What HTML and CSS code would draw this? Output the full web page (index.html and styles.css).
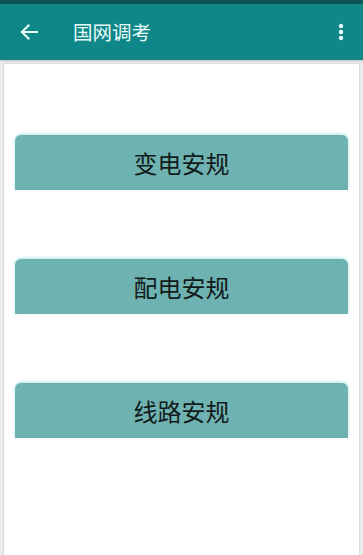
FILE: index.html
```html
<!DOCTYPE html>
<html lang="zh">
<head>
<meta charset="utf-8">
<title>国网调考</title>
<link rel="stylesheet" href="styles.css">
</head>
<body>
<div class="statusbar"></div>
<header class="toolbar">
  <svg class="back" width="18" height="16" viewBox="0 0 18 16"><path d="M17 8H2M8.5 1.5L2 8l6.5 6.5" fill="none" stroke="#e6fbfa" stroke-width="2.2" stroke-linecap="square"/></svg>
  <h1 class="title">国网调考</h1>
  <svg class="more" width="6" height="18" viewBox="0 0 6 18"><circle cx="3" cy="3" r="2.2" fill="#e6fbfa"/><circle cx="3" cy="9" r="2.2" fill="#e6fbfa"/><circle cx="3" cy="15" r="2.2" fill="#e6fbfa"/></svg>
</header>
<main class="card">
  <button class="btn">变电安规</button>
  <button class="btn">配电安规</button>
  <button class="btn">线路安规</button>
</main>
</body>
</html>
```

FILE: styles.css
```css
html, body {
  margin: 0;
  padding: 0;
  width: 363px;
  height: 555px;
  overflow: hidden;
  background: #ececec;
  font-family: "Noto Sans CJK SC", "Noto Sans", sans-serif;
}
.statusbar {
  height: 4px;
  background: #0b5556;
}
.toolbar {
  height: 56px;
  background: #0f8688;
  display: flex;
  align-items: center;
  padding: 0 20px;
  box-shadow: 0 1px 2px rgba(0,0,0,0.2);
}
.back {
  flex: none;
}
.title {
  margin: 0 0 0 35px;
  flex: 1;
  font-size: 19.5px;
  font-weight: 400;
  color: #e6fbfa;
  line-height: 1;
}
.more {
  flex: none;
  margin-right: -1px;
}
.card {
  margin: 3px 3px 0 3px;
  height: 500px;
  background: #fff;
  border: 1px solid #dcdcdc;
  border-bottom: none;
  box-sizing: border-box;
  padding: 71px 11px 0 11px;
  display: flex;
  flex-direction: column;
  gap: 69px;
}
.btn {
  height: 55px;
  border: none;
  border-radius: 6px 6px 0 0;
  background: #6fb2b2;
  box-shadow: 0 -1px 3px rgba(120,210,220,0.6);
  font-family: "Noto Sans CJK SC", "Noto Sans", sans-serif;
  font-size: 24px;
  color: #111b19;
  padding: 0;
  line-height: 1;
}
```
